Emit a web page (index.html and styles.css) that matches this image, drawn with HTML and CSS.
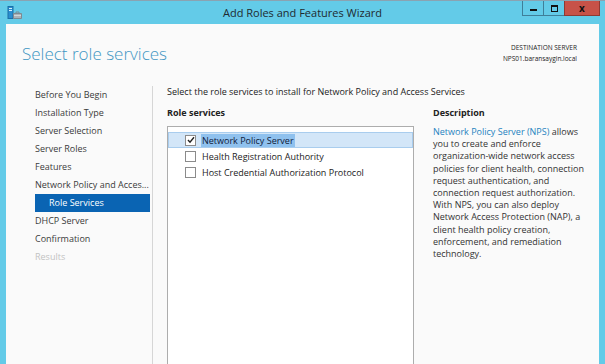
FILE: index.html
```html
<!DOCTYPE html>
<html>
<head>
    <meta charset="utf-8">
    <link rel="stylesheet" href="styles.css">
</head>
<body>
    <div class="window">
        <div class="titlebar">
            <svg class="app-icon" width="16" height="14" viewBox="0 0 16 14">
                <rect x="1" y="0.5" width="5" height="12" fill="#2a8fd0" stroke="#1b6fa8" stroke-width="1"/>
                <rect x="2" y="2" width="3" height="1" fill="#d8f0fb"/>
                <rect x="2" y="4" width="3" height="1" fill="#d8f0fb"/>
                <path d="M6.5 7.5 h8 v5 h-8 z" fill="#a9b3b9" stroke="#7d8a92" stroke-width="1"/>
                <path d="M9 7.5 v-1.5 h3 v1.5" fill="none" stroke="#7d8a92" stroke-width="1"/>
                <rect x="7" y="9" width="7" height="1" fill="#cfd6da"/>
            </svg>
            <div class="title">Add Roles and Features Wizard</div>
            <div class="controls">
                <span class="ctl min"><i></i></span>
                <span class="ctl max"><i></i></span>
                <span class="ctl close">x</span>
            </div>
        </div>

        <div class="frame">
            <div class="header">
                <h1>Select role services</h1>
                <div class="dest">
                    <div>DESTINATION SERVER</div>
                    <div>NPS01.baransaygin.local</div>
                </div>
            </div>

            <div class="main">
                <ul class="nav">
                    <li>Before You Begin</li>
                    <li>Installation Type</li>
                    <li>Server Selection</li>
                    <li>Server Roles</li>
                    <li>Features</li>
                    <li>Network Policy and Acces...</li>
                    <li class="sub active">Role Services</li>
                    <li>DHCP Server</li>
                    <li>Confirmation</li>
                    <li class="disabled">Results</li>
                </ul>

                <div class="content">
                    <p class="intro">Select the role services to install for Network Policy and Access Services</p>
                    <div class="cols">
                        <div class="services">
                            <div class="label">Role services</div>
                            <div class="listbox">
                                <div class="row selected">
                                    <span class="check">
                                        <svg width="8" height="8" viewBox="0 0 8 8"><path d="M1 4 L3 6.2 L7 1.2" fill="none" stroke="#222" stroke-width="1.4"/></svg>
                                    </span>
                                    <span class="name">Network Policy Server</span>
                                </div>
                                <div class="row">
                                    <span class="check"></span>
                                    <span class="name">Health Registration Authority</span>
                                </div>
                                <div class="row">
                                    <span class="check"></span>
                                    <span class="name">Host Credential Authorization Protocol</span>
                                </div>
                            </div>
                        </div>
                        <div class="desc">
                            <div class="label">Description</div>
                            <p><span class="link">Network Policy Server (NPS)</span> allows<br>
                            you to create and enforce<br>
                            organization-wide network access<br>
                            policies for client health, connection<br>
                            request authentication, and<br>
                            connection request authorization.<br>
                            With NPS, you can also deploy<br>
                            Network Access Protection (NAP), a<br>
                            client health policy creation,<br>
                            enforcement, and remediation<br>
                            technology.</p>
                        </div>
                    </div>
                </div>
            </div>
        </div>
    </div>
</body>
</html>
```

FILE: styles.css
```css
body {
    margin: 0;
    font-family: "Open Sans", "Noto Sans", sans-serif;
    color: #333;
}

.window {
    width: 605px;
    height: 364px;
    background: #63cbe8;
    border-top: 1px solid #8aa3b2;
    box-sizing: border-box;
    display: flex;
    flex-direction: column;
    overflow: hidden;
}

/* title bar */
.titlebar {
    height: 23px;
    display: grid;
    grid-template-columns: 1fr auto 1fr;
}

.app-icon {
    margin: 5px 0 0 7px;
}

.title {
    font-size: 11px;
    line-height: 24px;
    color: #1e2a30;
}

.controls {
    justify-self: end;
    display: flex;
    height: 15px;
    margin-right: 5px;
}

.ctl {
    display: flex;
    align-items: center;
    justify-content: center;
    width: 20px;
    border: 1px solid #3f7f99;
    border-top: none;
    margin-left: -1px;
}

.ctl.min i {
    width: 7px;
    height: 2px;
    margin-top: 4px;
    background: #111;
}

.ctl.max i {
    width: 5px;
    height: 4px;
    border: 1px solid #111;
    border-top-width: 2px;
}

.ctl.close {
    width: 34px;
    background: #c75248;
    border-color: #8e3a33;
    color: #111;
    font-weight: bold;
    font-size: 10px;
    line-height: 1;
}

/* window body */
.frame {
    flex: 1;
    margin: 0 6px 0 6px;
    background: #fafafa;
    display: flex;
    flex-direction: column;
    min-height: 0;
}

.header {
    height: 62px;
    box-sizing: border-box;
    padding: 18px 22px 0 16px;
    display: flex;
    justify-content: space-between;
    align-items: flex-start;
}

h1 {
    margin: 0;
    font-size: 17px;
    font-weight: 300;
    line-height: 24px;
    color: #3f96c3;
}

.dest {
    text-align: right;
    font-size: 6.5px;
    line-height: 11px;
    color: #222;
}

.main {
    flex: 1;
    display: flex;
    min-height: 0;
}

/* step list */
.nav {
    list-style: none;
    margin: 0;
    padding: 0 2px 0 29px;
    width: 115px;
    border-right: 1px solid #d6d6d6;
}

.nav li {
    height: 18px;
    line-height: 18px;
    font-size: 9px;
    color: #3a3a3a;
    white-space: nowrap;
    overflow: hidden;
    text-overflow: ellipsis;
}

.nav li.sub {
    padding-left: 14px;
}

.nav li.active {
    background: #0a64b3;
    color: #fff;
}

.nav li.disabled {
    color: #c2c2c2;
}

/* content */
.content {
    flex: 1;
    padding-left: 14px;
    display: flex;
    flex-direction: column;
    min-height: 0;
}

.intro {
    margin: 0;
    font-size: 9px;
    line-height: 11px;
    color: #222;
}

.cols {
    flex: 1;
    display: flex;
    gap: 19px;
    margin-top: 10px;
    min-height: 0;
}

.label {
    font-size: 9px;
    font-weight: bold;
    line-height: 12px;
    color: #222;
    margin-bottom: 7px;
}

.services {
    width: 247px;
    display: flex;
    flex-direction: column;
}

.listbox {
    flex: 1;
    background: #fff;
    border: 1px solid #adadad;
    border-bottom: none;
    padding-top: 5px;
}

.row {
    height: 16px;
    display: flex;
    align-items: center;
    padding-left: 17px;
    box-sizing: border-box;
    font-size: 9px;
    color: #222;
}

.row.selected {
    background: #d3e6f8;
    border: 1px solid #a9cdee;
    padding-left: 16px;
}

.check {
    width: 9px;
    height: 9px;
    border: 1px solid #8b8b8b;
    background: #fff;
    margin-right: 6px;
    display: flex;
    align-items: center;
    justify-content: center;
}

.row.selected .name {
    background: #8fc1ee;
    color: #10203a;
    padding: 0 1px;
    margin-left: -1px;
}

.desc {
    width: 162px;
}

.desc p {
    margin: 0;
    font-size: 9px;
    line-height: 12.2px;
    color: #333;
    white-space: nowrap;
}

.link {
    color: #1f83bf;
}
```
